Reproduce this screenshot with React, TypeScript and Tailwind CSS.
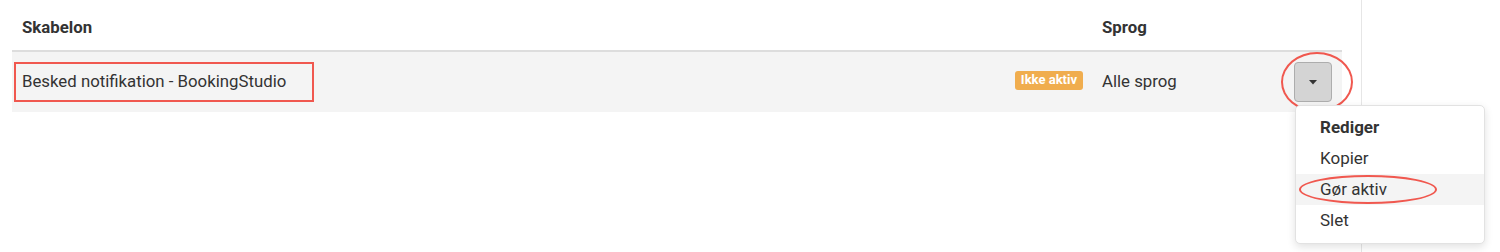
import React from "react";

export default function App() {
  return (
    <div
      className="flex h-[252px] w-[1500px] bg-white text-[#333]"
      style={{ fontFamily: "Roboto, 'Liberation Sans', sans-serif" }}
    >
      <div className="w-[1362px] shrink-0 border-r border-[#e6e6e6] pl-[12px] pr-[19px]">
        {/* header */}
        <div className="flex h-[52px] items-center border-b-2 border-[#dddddd] pt-[6px]">
          <div className="w-[1080px] pl-[10px] text-[16.8px] font-bold">Skabelon</div>
          <div className="flex-1 pl-[10px] text-[16.8px] font-bold">Sprog</div>
        </div>
        {/* row */}
        <div className="flex h-[60px] items-center bg-[#f4f4f4]">
          <div className="flex w-[1080px] items-center justify-between pl-[2px] pr-[9px]">
            <div className="flex h-[40px] w-[300px] items-center border-2 border-[#f0584f] pl-[6px] text-[16.8px]">
              Besked notifikation - BookingStudio
            </div>
            <span className="mt-[-4px] flex h-[19px] items-center rounded-[3px] bg-[#f0ad4e] px-[6px] text-[13px] font-bold text-white">
              Ikke aktiv
            </span>
          </div>
          <div className="flex-1 pl-[10px] text-[16.8px]">Alle sprog</div>
          <div className="relative mr-[10px]">
            <button className="flex h-[40px] w-[38px] items-center justify-center rounded-[4px] border border-[#adadad] bg-[#d4d4d4]">
              <svg width="8" height="5" viewBox="0 0 8 5">
                <path d="M0 0 L8 0 L4 4.5 Z" fill="#333" />
              </svg>
            </button>
            <div className="pointer-events-none absolute left-[-13px] top-[-10px] h-[60px] w-[72px] rounded-[50%] border-2 border-[#f0584f]" />
            {/* menu */}
            <div className="absolute left-[1px] top-[43px] z-10 w-[190px] rounded-[5px] border border-[#e2e2e2] bg-white pb-[7px] pt-[6px] shadow-[0_3px_8px_rgba(0,0,0,0.12)]">
              <div className="flex h-[31px] items-center pl-[24px] text-[17px] font-bold">Rediger</div>
              <div className="flex h-[31px] items-center pl-[24px] text-[17px]">Kopier</div>
              <div className="relative flex h-[31px] items-center bg-[#f4f4f4] pl-[24px] text-[17px]">
                Gør aktiv
                <div className="pointer-events-none absolute left-[3px] top-[1px] h-[29px] w-[138px] rounded-[50%] border-2 border-[#f0584f]" />
              </div>
              <div className="flex h-[31px] items-center pl-[24px] text-[17px]">Slet</div>
            </div>
          </div>
        </div>
      </div>
      <div className="flex-1" />
    </div>
  );
}
